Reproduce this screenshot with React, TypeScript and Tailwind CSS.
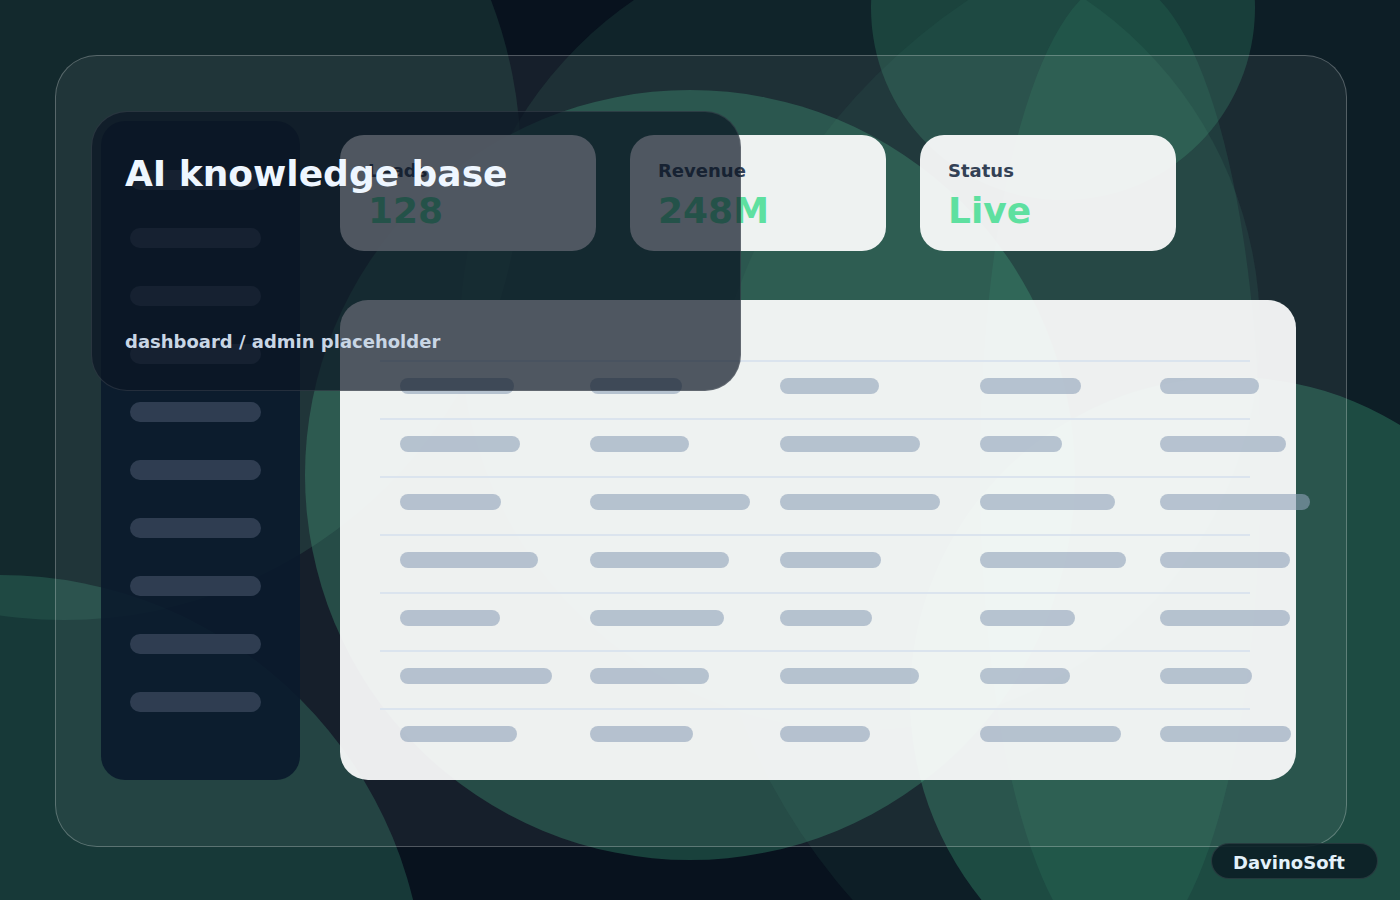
const stats = [
  { label: "Leads", value: "128" },
  { label: "Revenue", value: "248M" },
  { label: "Status", value: "Live" },
]

// placeholder bar widths per table row
const rows = [
  [114, 92, 99, 101, 99],
  [120, 99, 140, 82, 126],
  [101, 160, 160, 135, 150],
  [138, 139, 101, 146, 130],
  [100, 134, 92, 95, 130],
  [152, 119, 139, 90, 92],
  [117, 103, 90, 141, 131],
]

function Backdrop() {
  return (
    <svg className="absolute inset-0" width="1400" height="900" viewBox="0 0 1400 900">
      <rect width="1400" height="900" fill="#08121e" />
      <circle cx="64" cy="163" r="457" fill="rgb(50 110 90 / 0.25)" />
      <circle cx="0" cy="1000" r="425" fill="rgb(60 150 120 / 0.3)" />
      <circle cx="860" cy="330" r="400" fill="rgb(40 90 80 / 0.25)" />
      <circle cx="1300" cy="500" r="600" fill="rgb(40 90 80 / 0.18)" />
      <circle cx="690" cy="475" r="385" fill="rgb(60 160 120 / 0.33)" />
      <circle cx="1063" cy="8" r="192" fill="rgb(60 160 120 / 0.25)" />
      <ellipse cx="1120" cy="470" rx="140" ry="490" fill="rgb(60 160 120 / 0.14)" />
      <circle cx="1231" cy="698" r="321" fill="rgb(60 160 120 / 0.35)" />
    </svg>
  )
}

function Sidebar() {
  return (
    <div className="w-[199px] h-[659px] shrink-0 rounded-[24px] bg-[#0a1a2c]/90 pt-[49px] pl-[29px] flex flex-col gap-[38px]">
      {Array.from({ length: 10 }).map((_, i) => (
        <div key={i} className="w-[131px] h-5 rounded-full bg-[#334155]/90" />
      ))}
    </div>
  )
}

function StatCard({ label, value }: { label: string; value: string }) {
  return (
    <div className="w-[256px] h-[116px] rounded-[24px] bg-white/[0.92] pl-7 pt-[27px]">
      <div className="text-[18px] leading-none font-bold text-[#334155]">{label}</div>
      <div className="mt-[13px] text-[36px] leading-none font-bold text-[#5ee0a0]">{value}</div>
    </div>
  )
}

function DataTable() {
  return (
    <div className="mt-[49px] w-[956px] h-[480px] rounded-[28px] bg-white/[0.92] pt-[60px] pl-10">
      <div className="w-[870px]">
        {rows.map((row, r) => (
          <div
            key={r}
            className="h-[58px] border-t-2 border-[#dbe4ee] pl-5 pt-4 grid grid-cols-[190px_190px_200px_180px_1fr]"
          >
            {row.map((w, c) => (
              <div key={c} className="h-4 rounded-full bg-slate-400/60" style={{ width: w }} />
            ))}
          </div>
        ))}
      </div>
    </div>
  )
}

export default function App() {
  return (
    <div className="relative w-[1400px] h-[900px] overflow-hidden font-['DejaVu_Sans',sans-serif] pt-[55px] pl-[55px]">
      <Backdrop />

      <div className="relative w-[1292px] h-[792px] rounded-[42px] border border-white/25 bg-white/[0.06] pl-[45px] pt-[65px] flex">
        <Sidebar />
        <div className="ml-[40px] pt-[14px]">
          <div className="flex gap-[34px]">
            {stats.map((s) => (
              <StatCard key={s.label} label={s.label} value={s.value} />
            ))}
          </div>
          <DataTable />
        </div>
      </div>

      <div className="absolute left-[91px] top-[111px] w-[650px] h-[280px] rounded-[36px] border border-white/10 bg-[#0b1524]/70 pl-[33px] pt-[44px]">
        <h1 className="text-[36px] leading-none font-bold text-[#eef6ff]">AI knowledge base</h1>
        <p className="mt-[141px] text-[18px] leading-none font-bold text-[#c9d6e5]">dashboard / admin placeholder</p>
      </div>

      <div className="absolute left-[1211px] top-[843px] w-[167px] h-[36px] rounded-full border border-white/10 bg-[#0c1f26]/90 pl-[21px] pt-[10px]">
        <span className="block text-[18px] leading-none font-bold text-[#e3f1fa]">DavinoSoft</span>
      </div>
    </div>
  )
}
